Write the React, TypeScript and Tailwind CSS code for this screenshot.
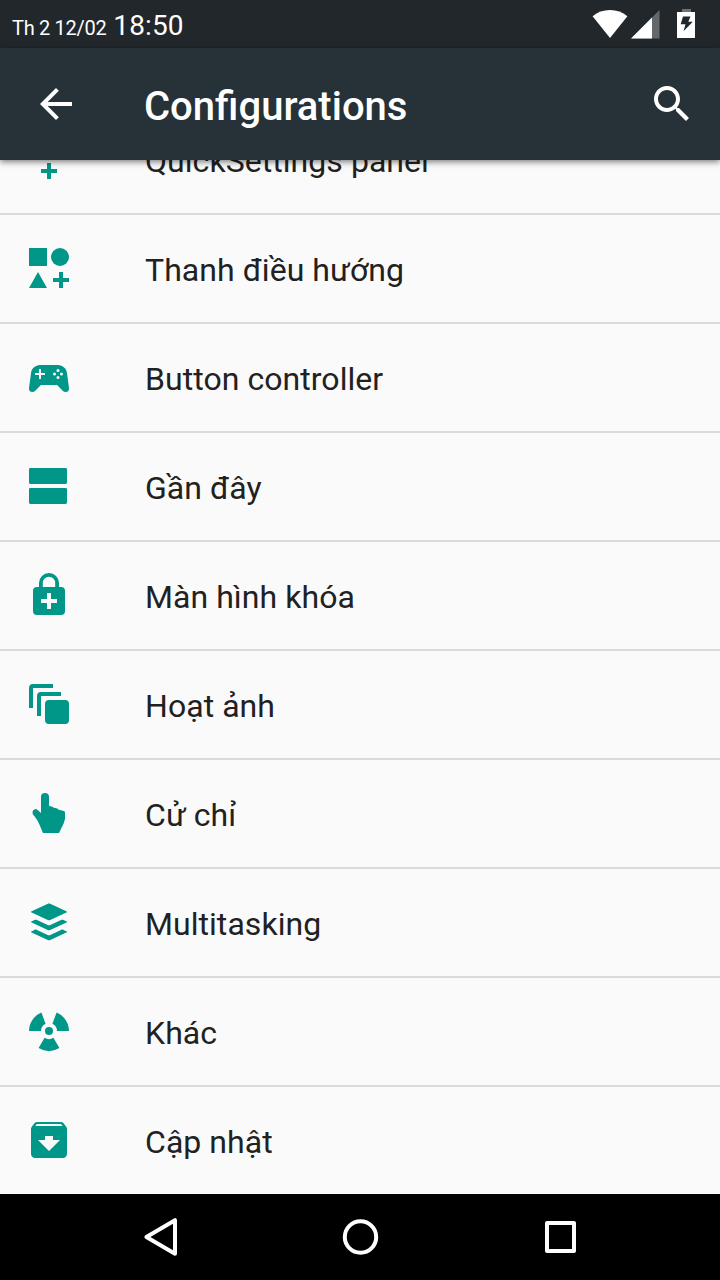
import type { ReactNode } from "react";

const items: { title: string; icon: ReactNode }[] = [
  {
    title: "QuickSettings panel",
    icon: <path d="M11 14h2v3h3v2h-3v3h-2v-3H8v-2h3z" />,
  },
  {
    title: "Thanh điều hướng",
    icon: (
      <>
        <path d="M2 2h9v9H2z" />
        <circle cx="17.5" cy="6.5" r="4.5" />
        <path d="M6.5 14L11 22H2z" />
        <path d="M17 14h2v3h3v2h-3v3h-2v-3h-3v-2h3z" />
      </>
    ),
  },
  {
    title: "Button controller",
    icon: (
      <>
        <path d="M7.97,16L5,19C4.67,19.3 4.23,19.5 3.75,19.5A1.75,1.75 0 0,1 2,17.75V17.5L3,10.12C3.21,7.81 5.14,6 7.5,6H16.5C18.86,6 20.79,7.81 21,10.12L22,17.5V17.75A1.75,1.75 0 0,1 20.25,19.5C19.77,19.5 19.33,19.3 19,19L16.03,16H7.97M7,8V10H5V11H7V13H8V11H10V10H8V8H7Z" />
        <g className="fill-[#fafafa]">
          <circle cx="16.5" cy="8.75" r="0.75" />
          <circle cx="14.75" cy="10.5" r="0.75" />
          <circle cx="18.25" cy="10.5" r="0.75" />
          <circle cx="16.5" cy="12.25" r="0.75" />
        </g>
      </>
    ),
  },
  {
    title: "Gần đây",
    icon: (
      <>
        <rect x="2" y="3" width="19" height="8" rx="0.7" />
        <rect x="2" y="13" width="19" height="8" rx="0.7" />
      </>
    ),
  },
  {
    title: "Màn hình khóa",
    icon: (
      <path d="M18,8H17V6A5,5 0 0,0 7,6V8H6A2,2 0 0,0 4,10V20A2,2 0 0,0 6,22H18A2,2 0 0,0 20,20V10A2,2 0 0,0 18,8M8.9,6A3.1,3.1 0 0,1 15.1,6V8H8.9V6M16,16H13V19H11V16H8V14H11V11H13V14H16V16Z" />
    ),
  },
  {
    title: "Hoạt ảnh",
    icon: (
      <>
        <path d="M2 14V4a2 2 0 0 1 2-2h10v2H4v10z" />
        <path d="M6 18V8a2 2 0 0 1 2-2h10v2H8v10z" />
        <rect x="10" y="10" width="12" height="12" rx="2" />
      </>
    ),
  },
  {
    title: "Cử chỉ",
    icon: (
      <path d="M8 12V4a2 2 0 0 1 4 0v4.4L14 9l.4.4 1.8.3.4.5 2.8.8q.6.2.6.8V15l-.6 2L17 22H9L7.2 17.7C6.3 15.5 5.3 14.2 4 12.7C3.5 11.7 3.8 10.4 5.2 10C6 10 6.5 10.6 8 12Z" />
    ),
  },
  {
    title: "Multitasking",
    icon: (
      <path d="M12.6,2.86C15.27,4.1 18,5.39 20.66,6.63C20.81,6.7 21,6.75 21,6.95C21,7.15 20.81,7.19 20.66,7.26C18,8.5 15.3,9.77 12.62,11C12.21,11.21 11.79,11.21 11.38,11C8.69,9.76 6,8.5 3.32,7.25C3.18,7.19 3,7.14 3,6.94C3,6.76 3.18,6.71 3.31,6.65C6,5.39 8.74,4.1 11.44,2.85C11.73,2.72 12.3,2.73 12.6,2.86M12,21.15C11.8,21.15 11.66,21.11 11.38,20.97C8.69,19.73 6,18.47 3.33,17.22C3.19,17.15 3,17.11 3,16.9C3,16.7 3.19,16.66 3.34,16.59C3.78,16.38 4.23,16.17 4.67,15.96C5.12,15.76 5.56,15.76 6,15.97C7.79,16.8 9.57,17.63 11.35,18.46C11.79,18.67 12.23,18.66 12.67,18.46C14.45,17.62 16.23,16.79 18,15.96C18.44,15.76 18.87,15.75 19.29,15.95C19.77,16.16 20.24,16.39 20.71,16.61C20.78,16.64 20.85,16.68 20.91,16.73C21.04,16.83 21.04,17 20.91,17.08C20.83,17.14 20.74,17.19 20.65,17.23C18,18.5 15.33,19.72 12.66,20.95C12.46,21.05 12.19,21.15 12,21.15M12,16.17C11.9,16.17 11.55,16.07 11.36,16C8.68,14.74 6,13.5 3.34,12.24C3.2,12.18 3,12.13 3,11.93C3,11.72 3.2,11.68 3.35,11.61C3.8,11.39 4.25,11.18 4.7,10.97C5.13,10.78 5.56,10.78 6,11C7.78,11.82 9.58,12.66 11.38,13.5C11.79,13.69 12.21,13.69 12.63,13.5C14.43,12.65 16.23,11.81 18.04,10.97C18.45,10.78 18.87,10.78 19.29,10.97C19.76,11.19 20.24,11.41 20.71,11.63C20.77,11.66 20.84,11.69 20.9,11.74C21.04,11.85 21.04,12 20.89,12.12C20.84,12.16 20.77,12.19 20.71,12.22C18,13.5 15.31,14.75 12.61,16C12.42,16.09 12.08,16.17 12,16.17Z" />
    ),
  },
  {
    title: "Khác",
    icon: (
      <>
        <circle cx="12" cy="12" r="2" />
        <path d="M2 12A10 10 0 0 1 8.2 2.8L10.3 8.4A4 4 0 0 0 8 12z" />
        <path d="M22 12A10 10 0 0 0 15.8 2.8L13.7 8.4A4 4 0 0 1 16 12z" />
        <path d="M6.8 20.5A10 10 0 0 0 17.2 20.5L14.2 15.4A4 4 0 0 1 9.8 15.4z" />
      </>
    ),
  },
  {
    title: "Cập nhật",
    icon: (
      <path d="M20.54 5.23l-1.39-1.68C18.88 3.21 18.47 3 18 3H6c-.47 0-.88.21-1.16.55L3.46 5.23C3.17 5.57 3 6.02 3 6.5V19c0 1.1.9 2 2 2h14c1.1 0 2-.9 2-2V6.5c0-.48-.17-.93-.46-1.27zM12 17.5L6.5 12H10v-2h4v2h3.5L12 17.5zM5.12 5l.81-1h12l.94 1H5.12z" />
    ),
  },
];

function StatusBar() {
  return (
    <div className="flex h-12 shrink-0 items-center justify-between bg-[#21272b] pl-3 text-white">
      <div className="flex items-baseline gap-[7px] pt-1">
        <span className="text-[20px] leading-none tracking-[-0.3px]">
          Th 2 12/02
        </span>
        <span className="text-[28px] leading-[46px] tracking-[0.1px]">
          18:50
        </span>
      </div>
      <svg className="h-12 w-[132px] fill-white" viewBox="588 0 132 48">
        <path d="M610 38L592.6 16.2Q600 10 610 10T627.4 16.2z" />
        <path d="M631 38.6L659.5 10v28.6z" fillOpacity="0.3" />
        <path d="M631 38.6L652 17.5v21.1z" />
        <path d="M682 9h9v3h-9z" fillOpacity="0.35" />
        <path d="M677 12h18v26h-18z" />
        <path
          className="fill-[#21272b]"
          d="M683 16.5h7.5l-2.2 5.2h4.5L683.5 31.2l2-7h-4.8z"
        />
      </svg>
    </div>
  );
}

function AppBar() {
  return (
    <header className="z-10 flex h-28 shrink-0 items-center bg-[#263238] pr-6 pl-8 text-white shadow-[0_2px_6px_rgba(0,0,0,0.5)]">
      <svg className="size-12 fill-current" viewBox="0 0 24 24">
        <path d="M20 11H7.83l5.59-5.59L12 4l-8 8 8 8 1.41-1.41L7.83 13H20v-2z" />
      </svg>
      <h1 className="ml-16 flex-1 pt-1.5 text-[40px] leading-none font-medium">
        Configurations
      </h1>
      <svg className="size-12 fill-current" viewBox="0 0 24 24">
        <path d="M15.5 14h-.79l-.28-.27C15.41 12.59 16 11.11 16 9.5 16 5.91 13.09 3 9.5 3S3 5.91 3 9.5 5.91 16 9.5 16c1.61 0 3.09-.59 4.23-1.57l.27.28v.79l5 4.99L20.49 19l-4.99-5zm-6 0C7.01 14 5 11.99 5 9.5S7.01 5 9.5 5 14 7.01 14 9.5 11.99 14 9.5 14z" />
      </svg>
    </header>
  );
}

function NavBar() {
  return (
    <nav className="flex h-[86px] shrink-0 items-center justify-center gap-[152px] bg-black">
      <svg
        className="size-12 fill-none stroke-white stroke-4"
        viewBox="0 0 48 48"
      >
        <path d="M39 7.2v33.6L10.4 24z" strokeLinejoin="round" />
      </svg>
      <svg
        className="size-12 fill-none stroke-white stroke-4"
        viewBox="0 0 48 48"
      >
        <circle cx="24.5" cy="24" r="15.7" />
      </svg>
      <svg
        className="size-12 fill-none stroke-white stroke-4"
        viewBox="0 0 48 48"
      >
        <path d="M11 10h27v28H11z" strokeLinejoin="round" />
      </svg>
    </nav>
  );
}

export default function App() {
  return (
    <div className="flex h-[1280px] w-[720px] flex-col overflow-hidden bg-[#fafafa] font-['Roboto',sans-serif]">
      <StatusBar />
      <AppBar />
      <main className="min-h-0 flex-1 overflow-hidden">
        {/* list is scrolled half a row down */}
        <ul className="-mt-[54px]">
          {items.map((item) => (
            <li
              key={item.title}
              className="flex h-[109px] items-center border-b-2 border-[#dadada] pb-0.5 pl-[25px]"
            >
              <svg
                className="size-12 shrink-0 fill-[#009688]"
                viewBox="0 0 24 24"
              >
                {item.icon}
              </svg>
              <span className="ml-[72px] pt-1 text-[32px] leading-none tracking-[0.05px] text-[#212121]">
                {item.title}
              </span>
            </li>
          ))}
        </ul>
      </main>
      <NavBar />
    </div>
  );
}
